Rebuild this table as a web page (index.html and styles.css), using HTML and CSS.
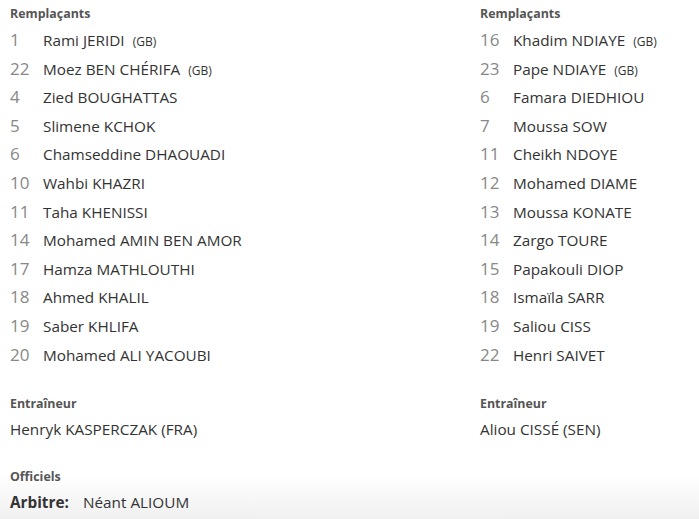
FILE: index.html
```html
<!DOCTYPE html>
<html>
<head>
<meta charset="utf-8">
<link rel="stylesheet" href="styles.css">
</head>
<body>
<div class="page">
  <div class="cols">
    <section class="col">
      <h3 class="head">Remplaçants</h3>
      <ul class="list">
        <li><span class="num">1</span><span class="name">Rami JERIDI</span><span class="gb">(GB)</span></li>
        <li><span class="num">22</span><span class="name">Moez BEN CHÉRIFA</span><span class="gb">(GB)</span></li>
        <li><span class="num">4</span><span class="name">Zied BOUGHATTAS</span></li>
        <li><span class="num">5</span><span class="name">Slimene KCHOK</span></li>
        <li><span class="num">6</span><span class="name">Chamseddine DHAOUADI</span></li>
        <li><span class="num">10</span><span class="name">Wahbi KHAZRI</span></li>
        <li><span class="num">11</span><span class="name">Taha KHENISSI</span></li>
        <li><span class="num">14</span><span class="name">Mohamed AMIN BEN AMOR</span></li>
        <li><span class="num">17</span><span class="name">Hamza MATHLOUTHI</span></li>
        <li><span class="num">18</span><span class="name">Ahmed KHALIL</span></li>
        <li><span class="num">19</span><span class="name">Saber KHLIFA</span></li>
        <li><span class="num">20</span><span class="name">Mohamed ALI YACOUBI</span></li>
      </ul>
      <h3 class="head coach-head">Entraîneur</h3>
      <p class="coach">Henryk KASPERCZAK (FRA)</p>
    </section>
    <section class="col">
      <h3 class="head">Remplaçants</h3>
      <ul class="list">
        <li><span class="num">16</span><span class="name">Khadim NDIAYE</span><span class="gb">(GB)</span></li>
        <li><span class="num">23</span><span class="name">Pape NDIAYE</span><span class="gb">(GB)</span></li>
        <li><span class="num">6</span><span class="name">Famara DIEDHIOU</span></li>
        <li><span class="num">7</span><span class="name">Moussa SOW</span></li>
        <li><span class="num">11</span><span class="name">Cheikh NDOYE</span></li>
        <li><span class="num">12</span><span class="name">Mohamed DIAME</span></li>
        <li><span class="num">13</span><span class="name">Moussa KONATE</span></li>
        <li><span class="num">14</span><span class="name">Zargo TOURE</span></li>
        <li><span class="num">15</span><span class="name">Papakouli DIOP</span></li>
        <li><span class="num">18</span><span class="name">Ismaïla SARR</span></li>
        <li><span class="num">19</span><span class="name">Saliou CISS</span></li>
        <li><span class="num">22</span><span class="name">Henri SAIVET</span></li>
      </ul>
      <h3 class="head coach-head">Entraîneur</h3>
      <p class="coach">Aliou CISSÉ (SEN)</p>
    </section>
  </div>
  <section class="officials">
    <h3 class="head">Officiels</h3>
    <p class="ref"><span class="ref-label">Arbitre:</span><span class="ref-name">Néant ALIOUM</span></p>
  </section>
</div>
</body>
</html>
```

FILE: styles.css
```css
html, body {
  margin: 0;
  padding: 0;
}
body {
  font-family: "Open Sans", "DejaVu Sans", sans-serif;
  color: #333;
  width: 699px;
  height: 519px;
  overflow: hidden;
  background: linear-gradient(to bottom, #fff 0, #fff 475px, #f0f0f0 519px);
}
.page {
  height: 519px;
  padding: 0 0 0 10px;
  box-sizing: border-box;
}
.cols {
  display: grid;
  grid-template-columns: 470px 1fr;
}
.head {
  margin: 0;
  font-size: 12.4px;
  font-weight: 700;
  color: #555;
  line-height: 16px;
  padding-top: 6px;
}
.list {
  list-style: none;
  margin: 4px 0 0 0;
  padding: 0;
}
.list li {
  display: flex;
  align-items: baseline;
  height: 28.6px;
  line-height: 28.6px;
}
.num {
  width: 33px;
  font-size: 17px;
  color: #888;
  flex: none;
}
.name {
  font-size: 15.3px;
  color: #333;
}
.gb {
  font-size: 12px;
  color: #333;
  margin-left: 8px;
}
.coach-head {
  padding-top: 27px;
}
.coach {
  margin: 0;
  font-size: 15.3px;
  line-height: 20px;
  padding-top: 7px;
}
.officials .head {
  padding-top: 30px;
}
.ref {
  margin: 0;
  padding-top: 7px;
  font-size: 15.3px;
  line-height: 20px;
  display: flex;
}
.ref-label {
  font-weight: 700;
  width: 73px;
  color: #333;
}
.ref-name {
  color: #333;
}
```
